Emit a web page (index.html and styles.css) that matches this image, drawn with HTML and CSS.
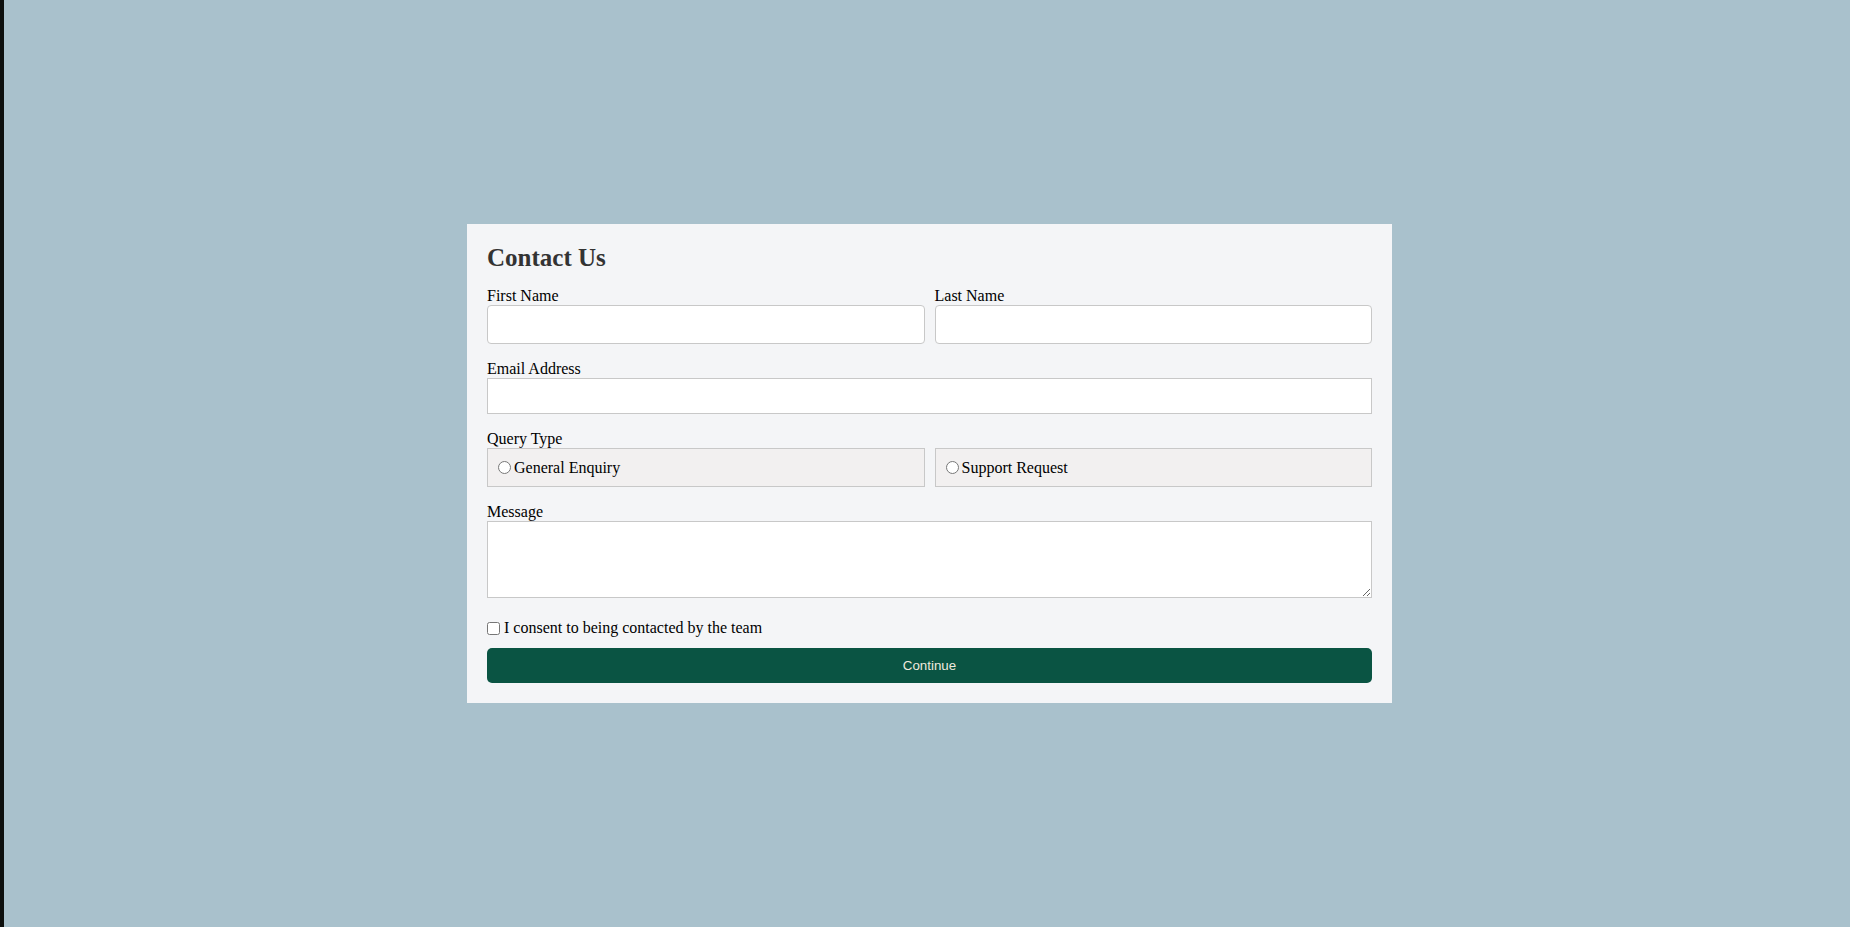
FILE: index.html
```html
<!DOCTYPE html>
<html lang="en">
<head>
<meta charset="utf-8">
<title>Contact Us</title>
<link rel="stylesheet" href="styles.css">
</head>
<body>
  <main class="page">
    <form class="card">
      <h2 class="title">Contact Us</h2>
      <div class="row two">
        <div class="field">
          <label class="label" for="fn">First Name</label>
          <input class="input rounded" id="fn" type="text">
        </div>
        <div class="field">
          <label class="label" for="ln">Last Name</label>
          <input class="input rounded" id="ln" type="text">
        </div>
      </div>
      <div class="row">
        <label class="label" for="em">Email Address</label>
        <input class="input email" id="em" type="email">
      </div>
      <div class="row">
        <span class="label">Query Type</span>
        <div class="two">
          <label class="option"><input class="radio" type="radio" name="q">General Enquiry</label>
          <label class="option"><input class="radio" type="radio" name="q">Support Request</label>
        </div>
      </div>
      <div class="row">
        <label class="label" for="msg">Message</label>
        <textarea class="textarea" id="msg"></textarea>
      </div>
      <label class="consent"><input class="check" type="checkbox">I consent to being contacted by the team</label>
      <button class="submit" type="button">Continue</button>
    </form>
  </main>
</body>
</html>
```

FILE: styles.css
```css
* { box-sizing: border-box; }

html, body {
  margin: 0;
  padding: 0;
  height: 100%;
}

body {
  background: #a9c1cc;
  font-family: "Liberation Serif", "Times New Roman", serif;
  font-size: 16px;
  color: #000;
}

.page {
  height: 927px;
  border-left: 4px solid #0d0f0d;
  padding-left: 5px;
  display: flex;
  align-items: center;
  justify-content: center;
}

.card {
  width: 925px;
  background: #f4f5f7;
  padding: 20px;
}

.title {
  margin: 0 0 15px;
  font-size: 25px;
  line-height: 28px;
  font-weight: bold;
  color: #333333;
}

.row {
  margin-bottom: 16px;
}

.two {
  display: grid;
  grid-template-columns: 1fr 1fr;
  column-gap: 10px;
}

.label {
  display: block;
  line-height: 18px;
}

.input {
  display: block;
  width: 100%;
  margin: 0;
  background: #fff;
  border: 1px solid #c8c8c8;
  font: inherit;
  padding: 0 10px;
}

.rounded {
  height: 39px;
  border-radius: 4px;
}

.email {
  height: 36px;
  border-radius: 0;
}

.option {
  display: flex;
  align-items: center;
  height: 39px;
  padding: 0 10px;
  background: #f2f0f0;
  border: 1px solid #c8c8c8;
  line-height: 18px;
}

.radio {
  width: 13px;
  height: 13px;
  margin: 0 3px 0 0;
}

.textarea {
  display: block;
  width: 100%;
  height: 77px;
  margin: 0;
  border: 1px solid #c8c8c8;
  background: #fff;
  font: inherit;
}

.consent {
  display: flex;
  align-items: center;
  height: 18px;
  line-height: 18px;
  margin-top: 21px;
  margin-bottom: 11px;
}

.check {
  width: 13px;
  height: 13px;
  margin: 0 4px 0 0;
}

.submit {
  display: block;
  width: 100%;
  height: 35px;
  margin: 0;
  border: 0;
  border-radius: 5px;
  background: #0a5443;
  color: #efeadf;
  font-family: "Liberation Sans", Arial, sans-serif;
  font-size: 13.33px;
}
```
